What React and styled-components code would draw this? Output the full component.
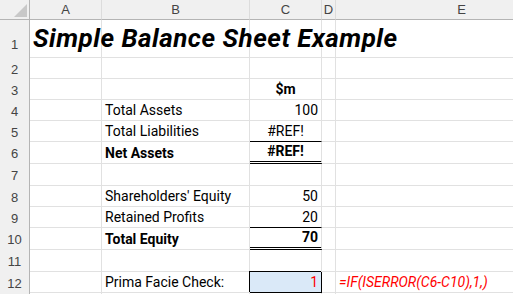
import React from "react";
import styled, { createGlobalStyle } from "styled-components";

const GlobalStyle = createGlobalStyle`
  html, body {
    margin: 0;
    padding: 0;
    background: #fff;
    overflow: hidden;
  }
  * { box-sizing: border-box; }
`;

const COLS = [
  { key: "A", w: 72 },
  { key: "B", w: 148 },
  { key: "C", w: 72 },
  { key: "D", w: 14 },
  { key: "E", w: 252 },
];

const ROWS = [
  { n: 1, h: 38, title: "Simple Balance Sheet Example" },
  { n: 2, h: 21 },
  { n: 3, h: 21, c: "$m", cBold: true, cAlign: "center" },
  { n: 4, h: 21, b: "Total Assets", c: "100" },
  { n: 5, h: 21, b: "Total Liabilities", c: "#REF!", cAlign: "center", cLine: "single" },
  { n: 6, h: 22, b: "Net Assets", bold: true, c: "#REF!", cBold: true, cAlign: "center", cLine: "double" },
  { n: 7, h: 22 },
  { n: 8, h: 21, b: "Shareholders' Equity", c: "50" },
  { n: 9, h: 21, b: "Retained Profits", c: "20", cLine: "single" },
  { n: 10, h: 22, b: "Total Equity", bold: true, c: "70", cBold: true, cLine: "double" },
  { n: 11, h: 22 },
  { n: 12, h: 21, b: "Prima Facie Check:", c: "1", check: true, e: "=IF(ISERROR(C6-C10),1,)" },
  // only the top edge of row 13 is in view, so its number is not drawn
  { n: 13, h: 21, hidden: true },
];

const Sheet = styled.div`
  display: grid;
  grid-template-columns: 30px ${COLS.map((c) => c.w + "px").join(" ")};
  grid-template-rows: 20px ${ROWS.map((r) => r.h + "px").join(" ")};
  width: 513px;
  height: 294px;
  overflow: hidden;
  font-family: Roboto, "Liberation Sans", Arial, sans-serif;
  font-size: 14px;
  color: #000;
`;

const Corner = styled.div`
  background: #f0f0f0;
  border-right: 1px solid #b4b4b4;
  border-bottom: 1px solid #b4b4b4;
  display: flex;
  align-items: flex-end;
  justify-content: flex-end;
  padding: 0 2px 2px 0;
`;

const ColHead = styled.div`
  background: #f0f0f0;
  border-right: 1px solid #dcdcdc;
  border-bottom: 1px solid #b4b4b4;
  display: flex;
  align-items: center;
  justify-content: center;
  font-family: "Liberation Sans", Arial, sans-serif;
  font-size: 13px;
  color: #444;
  white-space: nowrap;
`;

const RowHead = styled.div`
  background: #f0f0f0;
  border-right: 1px solid #b4b4b4;
  display: flex;
  align-items: center;
  justify-content: center;
  padding-top: ${(p) => (p.$tall ? "10px" : "1px")};
  font-family: "Liberation Sans", Arial, sans-serif;
  font-size: 13px;
  color: #444;
`;

const Cell = styled.div`
  position: relative;
  display: flex;
  align-items: flex-end;
  justify-content: ${(p) =>
    p.$align === "right" ? "flex-end" : p.$align === "center" ? "center" : "flex-start"};
  padding: 0 3px 2px 3px;
  border-right: 1px solid #e1e1e1;
  border-bottom: ${(p) =>
    p.$line === "double"
      ? "3px double #000"
      : p.$line === "single"
      ? "1px solid #000"
      : "1px solid #e1e1e1"};
  font-weight: ${(p) => (p.$bold ? 700 : 400)};
  white-space: nowrap;
  overflow: visible;
  z-index: ${(p) => (p.$over ? 1 : 0)};
`;

const CheckCell = styled(Cell)`
  background: #dae9f8;
  border-right: 1px solid #000;
  border-bottom: 1px solid #000;
  box-shadow: -1px -1px 0 #000;
  color: #ff0000;
`;

const Title = styled.span`
  font-size: 26px;
  font-weight: 700;
  font-style: italic;
  letter-spacing: 0.5px;
  padding-bottom: 2px;
`;

const Formula = styled.span`
  color: #ff0000;
  font-style: italic;
  font-size: 14px;
`;

const CornerMark = () => (
  <svg width="13" height="13" viewBox="0 0 13 13">
    <polygon points="13,0 13,13 0,13" fill="#c8c8c8" />
  </svg>
);

export default function App() {
  return (
    <>
      <GlobalStyle />
      <Sheet>
        <Corner>
          <CornerMark />
        </Corner>
        {COLS.map((c) => (
          <ColHead key={c.key}>{c.key}</ColHead>
        ))}
        {ROWS.map((r) => (
          <React.Fragment key={r.n}>
            <RowHead $tall={r.h > 30}>{!r.hidden && r.n}</RowHead>
            <Cell $over={!!r.title}>{r.title && <Title>{r.title}</Title>}</Cell>
            <Cell $bold={r.bold}>{r.b}</Cell>
            {r.check ? (
              <CheckCell $align="right">{r.c}</CheckCell>
            ) : (
              <Cell $align={r.cAlign || "right"} $bold={r.cBold} $line={r.cLine}>
                {r.c}
              </Cell>
            )}
            <Cell />
            <Cell>{r.e && <Formula>{r.e}</Formula>}</Cell>
          </React.Fragment>
        ))}
      </Sheet>
    </>
  );
}
